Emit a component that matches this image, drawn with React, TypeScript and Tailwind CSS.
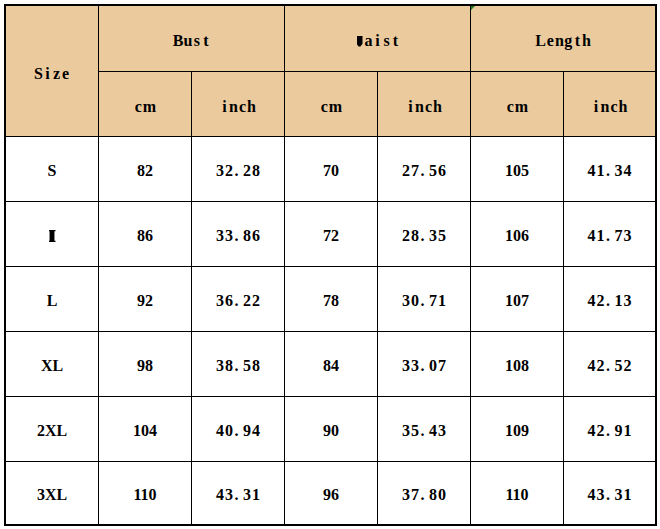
import React from "react";

const rows: [string, string, string, string, string, string, string][] = [
  ["S", "82", "32.28", "70", "27.56", "105", "41.34"],
  ["M", "86", "33.86", "72", "28.35", "106", "41.73"],
  ["L", "92", "36.22", "78", "30.71", "107", "42.13"],
  ["XL", "98", "38.58", "84", "33.07", "108", "42.52"],
  ["2XL", "104", "40.94", "90", "35.43", "109", "42.91"],
  ["3XL", "110", "43.31", "96", "37.80", "110", "43.31"],
];

const serif = { fontFamily: '"Liberation Serif", "DejaVu Serif", serif' };

function Mono({ text }: { text: string }) {
  return (
    <span className="inline-flex">
      {text.split("").map((c, i) => (
        <span key={i} className={`inline-block min-w-[9px] ${c === "." ? "text-left pl-[1px]" : "text-center"}`}>
          {c}
        </span>
      ))}
    </span>
  );
}

function Hd({ children, className = "" }: { children: React.ReactNode; className?: string }) {
  return (
    <div
      className={`bg-[#ebcb9e] flex items-center justify-center pt-[5px] text-[16px] font-bold text-black ${className}`}
      style={serif}
    >
      {children}
    </div>
  );
}

function Cell({ text }: { text: string }) {
  if (text === "M") {
    return (
      <div className="bg-white flex items-center justify-center pt-[4px]">
        <span className="inline-block w-[7px] h-[12px] bg-black [clip-path:polygon(0_0,100%_0,100%_10%,85%_10%,85%_90%,100%_90%,100%_100%,0_100%,0_90%,15%_90%,15%_10%,0_10%)]" />
      </div>
    );
  }
  const dec = text.includes(".");
  return (
    <div
      className="bg-white flex items-center justify-center pt-[4px] text-black text-[16px] font-bold"
      style={serif}
    >
      {dec ? <Mono text={text} /> : text}
    </div>
  );
}

export default function App() {
  return (
    <div className="w-[660px] h-[529px] bg-white pt-[4px] pl-[4px]">
      <div className="relative w-[653px] border-2 border-black bg-black">
        <div className="grid grid-cols-[92px_92px_92px_92px_92px_92px_91px] grid-rows-[65px_64px_64px_64px_64px_64px_64px_62px] gap-px">
          <Hd className="row-span-2">
            <Mono text="Size" />
          </Hd>
          <Hd className="col-span-2">
            <Mono text="Bust" />
          </Hd>
          <Hd className="col-span-2">
            <span className="inline-flex items-center">
              <span className="inline-flex w-[9px] justify-center">
                <span className="inline-block w-[6px] h-[11px] bg-black [clip-path:polygon(0_0,100%_0,100%_75%,65%_100%,35%_100%,0_75%)]" />
              </span>
              <Mono text="aist" />
            </span>
          </Hd>
          <Hd className="col-span-2 relative">
            <span className="absolute left-0 top-0 w-0 h-0 border-t-[4px] border-r-[4px] border-t-[#1e7a1e] border-r-transparent" />
            <Mono text="Length" />
          </Hd>
          <Hd>
            <Mono text="cm" />
          </Hd>
          <Hd>
            <Mono text="inch" />
          </Hd>
          <Hd>
            <Mono text="cm" />
          </Hd>
          <Hd>
            <Mono text="inch" />
          </Hd>
          <Hd>
            <Mono text="cm" />
          </Hd>
          <Hd>
            <Mono text="inch" />
          </Hd>
          {rows.map((r) => r.map((v, i) => <Cell key={r[0] + i} text={v} />))}
        </div>
      </div>
    </div>
  );
}
